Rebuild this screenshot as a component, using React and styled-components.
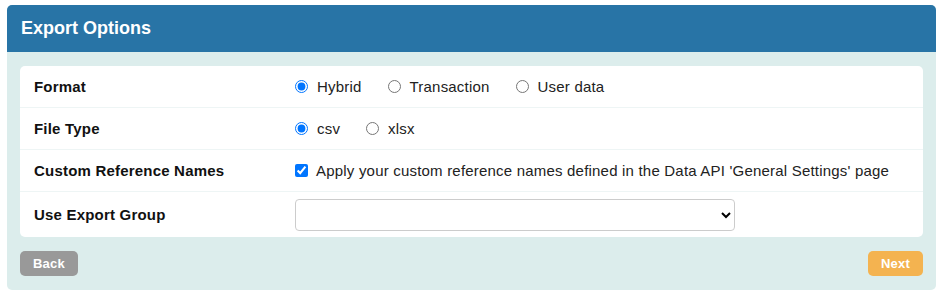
import styled, { createGlobalStyle } from "styled-components";

const GlobalStyle = createGlobalStyle`
  body {
    margin: 0;
    padding: 5px 7px;
    background: #ffffff;
    font-family: "Liberation Sans", Arial, sans-serif;
  }
`;

const Panel = styled.div`
  width: 929px;
  background: #dcedec;
  border-radius: 5px;
  overflow: hidden;
`;

const Header = styled.div`
  height: 47px;
  background: #2874a6;
  display: flex;
  align-items: center;
  padding: 0 14px;
  color: #ffffff;
  font-size: 18px;
  font-weight: 700;
`;

const Body = styled.div`
  padding: 14px 13px;
`;

const Card = styled.div`
  background: #ffffff;
  border-radius: 5px;
`;

const Row = styled.div`
  display: grid;
  grid-template-columns: 261px 1fr;
  align-items: center;
  height: ${(p) => p.$h || 42}px;
  padding: 0 14px;
  border-top: ${(p) => (p.$first ? "none" : "1px solid #eef5f5")};
  box-sizing: border-box;
`;

const Label = styled.div`
  font-size: 15px;
  letter-spacing: 0.2px;
  font-weight: 700;
  color: #111111;
`;

const Options = styled.div`
  display: flex;
  align-items: center;
  gap: 26px;
  font-size: 15px;
  letter-spacing: 0.2px;
  color: #222222;
`;

const Option = styled.label`
  display: flex;
  align-items: center;
  gap: ${(p) => (p.$box ? 8 : 9)}px;

  input {
    margin: 0;
    width: 13px;
    height: 13px;
  }
`;

const Select = styled.select`
  width: 440px;
  height: 32px;
  border: 1px solid #cccccc;
  border-radius: 4px;
  background: #ffffff;
  font-family: inherit;
  font-size: 14px;
`;

const Footer = styled.div`
  display: flex;
  justify-content: space-between;
  margin-top: 14px;
`;

const Button = styled.button`
  height: 25px;
  padding: 0 13px;
  border: none;
  border-radius: 5px;
  background: ${(p) => p.$bg};
  color: #ffffff;
  font-family: inherit;
  font-size: 13px;
  letter-spacing: 0.2px;
  font-weight: 700;
`;

export default function App() {
  return (
    <>
      <GlobalStyle />
      <Panel>
        <Header>Export Options</Header>
        <Body>
          <Card>
            <Row $first $h={41}>
              <Label>Format</Label>
              <Options>
                <Option>
                  <input type="radio" name="format" defaultChecked />
                  Hybrid
                </Option>
                <Option>
                  <input type="radio" name="format" />
                  Transaction
                </Option>
                <Option>
                  <input type="radio" name="format" />
                  User data
                </Option>
              </Options>
            </Row>
            <Row>
              <Label>File Type</Label>
              <Options>
                <Option>
                  <input type="radio" name="type" defaultChecked />
                  csv
                </Option>
                <Option>
                  <input type="radio" name="type" />
                  xlsx
                </Option>
              </Options>
            </Row>
            <Row>
              <Label>Custom Reference Names</Label>
              <Options>
                <Option $box>
                  <input type="checkbox" defaultChecked />
                  Apply your custom reference names defined in the Data API 'General Settings' page
                </Option>
              </Options>
            </Row>
            <Row $h={46}>
              <Label>Use Export Group</Label>
              <div>
                <Select>
                  <option></option>
                </Select>
              </div>
            </Row>
          </Card>
          <Footer>
            <Button $bg="#999999">Back</Button>
            <Button $bg="#f4b350">Next</Button>
          </Footer>
        </Body>
      </Panel>
    </>
  );
}
